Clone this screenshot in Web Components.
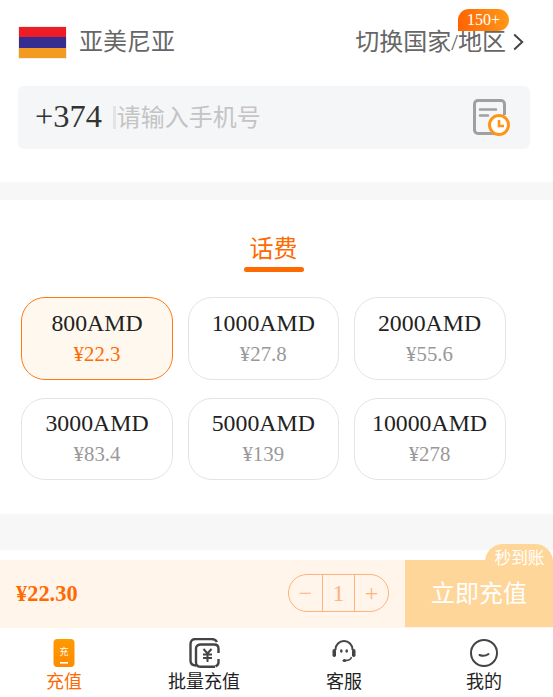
<!DOCTYPE html>
<html lang="zh">
<head>
<meta charset="utf-8">
<title>话费充值</title>
<style>
  html, body { margin: 0; padding: 0; background: #fff; }
  body {
    width: 553px;
    height: 697px;
    overflow: hidden;
    font-family: "Liberation Serif", "Noto Sans CJK SC", serif;
    color: #222;
  }
  gap-band { display: block; height: 18px; background: #f7f7f7; }
</style>
</head>
<body>
  <country-bar name="亚美尼亚" link="切换国家/地区" badge="150+"></country-bar>
  <phone-field code="+374" placeholder="请输入手机号"></phone-field>
  <gap-band></gap-band>
  <section-title text="话费"></section-title>
  <amount-grid>
    <amount-tile amount="800AMD" price="¥22.3" selected></amount-tile>
    <amount-tile amount="1000AMD" price="¥27.8"></amount-tile>
    <amount-tile amount="2000AMD" price="¥55.6"></amount-tile>
    <amount-tile amount="3000AMD" price="¥83.4"></amount-tile>
    <amount-tile amount="5000AMD" price="¥139"></amount-tile>
    <amount-tile amount="10000AMD" price="¥278"></amount-tile>
  </amount-grid>
  <pay-bar total="¥22.30" count="1"></pay-bar>
  <tab-bar></tab-bar>

<script>
class CountryBar extends HTMLElement {
  constructor() {
    super();
    this.attachShadow({ mode: "open" });
    this.shadowRoot.innerHTML = `
      <style>
        :host { display: flex; align-items: center; justify-content: space-between; height: 86px; padding: 0 29px 4px 18px; box-sizing: border-box; font-size: 24px; color: #666; }
        .left { display: flex; align-items: center; gap: 12px; }
        .flag { display: flex; flex-direction: column; width: 47px; height: 31px; margin-top: 3px; border: 1px solid #eee; }
        .flag i { flex: 1; }
        .name { margin-top: -3px; }
        .right { position: relative; display: flex; align-items: center; gap: 7px; }
        .link { margin-top: -3px; }
        .badge { position: absolute; top: -16px; right: 15px; width: 51px; height: 22px; line-height: 22px; text-align: center; font-size: 16px; color: #fff; background: linear-gradient(80deg, #ff6200, #ff9a1a); border-radius: 11px 11px 11px 0; }
        svg { display: block; margin-top: 2px; }
      </style>
      <div class="left">
        <div class="flag"><i style="background:#ee1c25"></i><i style="background:#352d8f"></i><i style="background:#f39a21"></i></div>
        <span class="name">${this.getAttribute("name")}</span>
      </div>
      <div class="right">
        <span class="badge">${this.getAttribute("badge")}</span>
        <span class="link">${this.getAttribute("link")}</span>
        <svg width="11" height="18" viewBox="0 0 11 18"><path d="M1.200 1.500l8 7.500-8 7.500" fill="none" stroke="#444" stroke-width="2"/></svg>
      </div>`;
  }
}

class PhoneField extends HTMLElement {
  constructor() {
    super();
    this.attachShadow({ mode: "open" });
    this.shadowRoot.innerHTML = `
      <style>
        :host { display: flex; align-items: center; height: 63px; margin: 0 23px 33px 18px; padding: 0 20px 0 17px; box-sizing: border-box; background: #f5f6f8; border-radius: 6px; }
        .code { font-size: 32.4px; color: #333; margin-top: -2px; }
        .bar { width: 3px; height: 23px; margin: 0 1px 0 11px; background: #e3e4e6; }
        .hint { flex: 1; font-size: 24px; color: #c4c4c4; margin-top: -5px; }
        svg { display: block; }
      </style>
      <span class="code">${this.getAttribute("code")}</span>
      <i class="bar"></i>
      <span class="hint">${this.getAttribute("placeholder")}</span>
      <svg width="37" height="38" viewBox="0 0 37 38">
        <path d="M22 34.500H5a3.500 3.500 0 0 1-3.500-3.500V5A3.500 3.500 0 0 1 5 1.500h23A3.500 3.500 0 0 1 31.500 5v11" fill="none" stroke="#a0a0a0" stroke-width="3"/>
        <path d="M7 10.500h16M7 16.500h8" stroke="#a0a0a0" stroke-width="2.600" stroke-linecap="round"/>
        <circle cx="26" cy="26" r="9.500" fill="#fff" stroke="#ff9416" stroke-width="3"/>
        <path d="M26 21v6h5" fill="none" stroke="#ff9416" stroke-width="2.600"/>
      </svg>`;
  }
}

class SectionTitle extends HTMLElement {
  constructor() {
    super();
    this.attachShadow({ mode: "open" });
    this.shadowRoot.innerHTML = `
      <style>
        :host { display: flex; flex-direction: column; align-items: center; height: 97px; padding: 31px 6px 0 0; box-sizing: border-box; font-size: 24px; color: #ff6a00; }
        span { line-height: 36px; }
        i { display: block; width: 60px; height: 5px; border-radius: 3px; background: #ff6a00; }
      </style>
      <span>${this.getAttribute("text")}</span><i></i>`;
  }
}

class AmountGrid extends HTMLElement {
  constructor() {
    super();
    this.attachShadow({ mode: "open" });
    this.shadowRoot.innerHTML = `
      <style>
        :host { display: grid; grid-template-columns: 152px 151.500px 152px; grid-auto-rows: 82.500px; column-gap: 14.500px; row-gap: 18px; padding: 0 0 34px 21px; border-bottom: 36px solid #f7f7f7; }
      </style>
      <slot></slot>`;
  }
}

class AmountTile extends HTMLElement {
  constructor() {
    super();
    this.attachShadow({ mode: "open" });
    this.shadowRoot.innerHTML = `
      <style>
        :host { display: flex; flex-direction: column; align-items: center; padding-bottom: 2px; justify-content: center; gap: 3px; box-sizing: border-box; border: 1px solid #e4e4e4; border-radius: 24px; }
        :host([selected]) { border-color: #ff7a14; background: #fff8ef; }
        .amount { font-size: 23.800px; line-height: 30px; color: #222; }
        .price { font-size: 20.800px; line-height: 26px; color: #999; }
        :host([selected]) .price { color: #ff6a00; }
      </style>
      <span class="amount">${this.getAttribute("amount")}</span>
      <span class="price">${this.getAttribute("price")}</span>`;
  }
}

class PayBar extends HTMLElement {
  constructor() {
    super();
    this.attachShadow({ mode: "open" });
    this.shadowRoot.innerHTML = `
      <style>
        :host { display: flex; position: relative; height: 68px; margin-top: 10px; background: #fff5eb; align-items: stretch; }
        .total { flex: 1; align-self: center; padding-left: 16px; font-size: 22.400px; font-weight: bold; color: #ff6a00; }
        .stepper { align-self: center; display: flex; width: 101px; height: 38px; margin: 0 16px 2px 0; box-sizing: border-box; border: 1px solid #ffb27c; border-radius: 19px; color: #ffb27c; font-size: 24px; }
        .stepper span { flex: 0 0 33px; display: flex; align-items: center; justify-content: center; }
        .stepper span + span { flex-basis: 32px; border-left: 1px solid #ffb27c; box-sizing: border-box; }
        .stepper span:last-child { flex: 1; border-left: 1px solid #ffb27c; }
        .buy { width: 148px; height: 67px; padding-bottom: 5px; box-sizing: border-box; display: flex; align-items: center; justify-content: center; background: #ffd699; color: #fff; font-size: 24px; }
        .fast { position: absolute; right: 0; top: -16px; width: 68px; height: 30px; padding-left: 1px; box-sizing: border-box; background: #ffd699; border-radius: 18px 18px 0 0; color: #fff; font-size: 16.700px; line-height: 29px; text-align: center; }
      </style>
      <div class="total">${this.getAttribute("total")}</div>
      <div class="stepper"><span>−</span><span>${this.getAttribute("count")}</span><span>+</span></div>
      <div class="buy">立即充值</div>
      <div class="fast">秒到账</div>`;
  }
}

class TabBar extends HTMLElement {
  constructor() {
    super();
    this.attachShadow({ mode: "open" });
    this.shadowRoot.innerHTML = `
      <style>
        :host { display: grid; grid-template-columns: repeat(4, 72px); justify-content: space-between; height: 69px; padding: 0 33px 0 28px; font-size: 18px; color: #222; }
        div { display: flex; flex-direction: column; align-items: center; }
        .on { color: #ff6a00; }
        svg { display: block; margin-top: 10px; height: 30px; }
        span { line-height: 27px; margin-top: 1px; white-space: nowrap; }
        text { font-family: "Noto Sans CJK SC", sans-serif; }
      </style>
      <div class="on">
        <svg width="22" height="30" viewBox="0 0 22 30">
          <defs><linearGradient id="g" x1="0" y1="0" x2="0" y2="1"><stop offset="0" stop-color="#ff9a00"/><stop offset="1" stop-color="#ff8a00"/></linearGradient></defs>
          <rect x="0.500" y="1" width="21" height="28" rx="4" fill="url(#g)"/>
          <text x="11" y="17" font-size="9" text-anchor="middle" fill="#fff">充</text>
          <rect x="7" y="24" width="8" height="1.600" fill="#fff"/>
        </svg>
        <span>充值</span>
      </div>
      <div>
        <svg width="31" height="30" viewBox="0 0 31 30">
          <path d="M7 27.500c-3.500 0-5.500-2-5.500-5V6c0-3 2-5 5-5h16c3 0 4.500 1 5.500 3" fill="none" stroke="#444" stroke-width="2.400"/>
          <path d="M26 28.800H12c-3 0-5-1-5-4V10.500c0-3 2-4 5-4h13c3 0 4.500 1 4.500 4v4.500M29.500 21v3.500c0 1.500-1 3-3 4" fill="none" stroke="#444" stroke-width="2.400"/>
          <path d="M14.500 11l4 4.500 4-4.500M14 16.500h9M14 20h9M18.500 15.500V24" fill="none" stroke="#444" stroke-width="2"/>
        </svg>
        <span>批量充值</span>
      </div>
      <div>
        <svg width="24" height="30" viewBox="0 0 24 30">
          <path d="M3.500 12V11.500a8.500 8.500 0 0 1 17 0v0.500" fill="none" stroke="#444" stroke-width="2"/>
          <rect x="0.500" y="11" width="3.500" height="8" rx="1.700" fill="#444"/>
          <rect x="20" y="11" width="3.500" height="8" rx="1.700" fill="#444"/>
          <ellipse cx="9.300" cy="13" rx="1.300" ry="1.800" fill="#444"/><ellipse cx="14.700" cy="13" rx="1.300" ry="1.800" fill="#444"/>
          <path d="M19.500 19c-.5 2.500-3 3.500-6 3.500" fill="none" stroke="#444" stroke-width="1.400"/>
          <ellipse cx="12.500" cy="22.500" rx="2" ry="1.500" fill="#444"/>
        </svg>
        <span>客服</span>
      </div>
      <div>
        <svg width="30" height="30" viewBox="0 0 30 30">
          <circle cx="15" cy="15" r="13" fill="none" stroke="#444" stroke-width="2"/>
          <path d="M10.500 17c3 1.300 6 1.300 9 -1" fill="none" stroke="#444" stroke-width="2" stroke-linecap="round"/>
        </svg>
        <span>我的</span>
      </div>`;
  }
}

customElements.define("country-bar", CountryBar);
customElements.define("phone-field", PhoneField);
customElements.define("section-title", SectionTitle);
customElements.define("amount-grid", AmountGrid);
customElements.define("amount-tile", AmountTile);
customElements.define("pay-bar", PayBar);
customElements.define("tab-bar", TabBar);
</script>
</body>
</html>
